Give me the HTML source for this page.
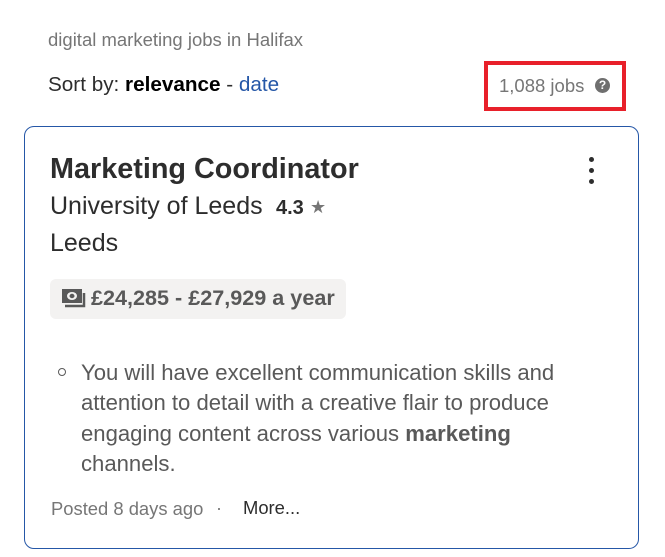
<!DOCTYPE html>
<html><head><meta charset="utf-8"><style>
body{margin:0;width:665px;height:557px;background:#fff;font-family:"Liberation Sans",sans-serif;position:relative;overflow:hidden}
.a{position:absolute;white-space:nowrap}
</style></head><body>
<div class="a" style="left:48px;top:29px;font-size:18.5px;color:#767676">digital marketing jobs in Halifax</div>
<div class="a" style="left:48px;top:73px;font-size:20.7px;color:#2d2d2d">Sort by: <b style="color:#000">relevance</b> - <span style="color:#2557a7">date</span></div>
<div class="a" style="left:484px;top:61px;width:134px;height:42px;border:4px solid #e8202a"></div>
<div class="a" style="left:499px;top:75px;font-size:18.5px;color:#767676">1,088 jobs</div>
<div class="a" style="left:595px;top:78px;width:15px;height:15px;border-radius:50%;background:#6f6f6f;color:#fff;font-size:12px;font-weight:bold;text-align:center;line-height:15px">?</div>
<div class="a" style="left:24px;top:126px;width:613px;height:421px;border:1px solid #2557a7;border-radius:10px"></div>
<div class="a" style="left:50px;top:153px;font-size:28.8px;font-weight:bold;color:#2d2d2d">Marketing Coordinator</div>
<div class="a" style="left:589px;top:157px;width:5px;height:5px;border-radius:50%;background:#2d2d2d"></div>
<div class="a" style="left:589px;top:168px;width:5px;height:5px;border-radius:50%;background:#2d2d2d"></div>
<div class="a" style="left:589px;top:179px;width:5px;height:5px;border-radius:50%;background:#2d2d2d"></div>
<div class="a" style="left:50px;top:192px;font-size:25px;color:#2d2d2d">University of Leeds</div>
<div class="a" style="left:276px;top:197px;font-size:20px;font-weight:bold;color:#2d2d2d">4.3</div>
<div class="a" style="left:310px;top:197px;font-size:18px;color:#767676">★</div>
<div class="a" style="left:50px;top:229px;font-size:25px;color:#2d2d2d">Leeds</div>
<div class="a" style="left:50px;top:279px;width:296px;height:40px;background:#f3f2f1;border-radius:6px"></div>
<svg class="a" style="left:61px;top:288px" width="26" height="22" viewBox="0 0 26 22"><rect x="1" y="1" width="20" height="14" fill="#595959"/><ellipse cx="11" cy="8" rx="5" ry="4" fill="#f3f2f1"/><ellipse cx="11" cy="8" rx="2.5" ry="2.2" fill="#595959"/><path d="M23 5v13H4" stroke="#595959" stroke-width="2.5" fill="none"/></svg>
<div class="a" style="left:91px;top:285px;font-size:21.6px;font-weight:bold;color:#595959">£24,285 - £27,929 a year</div>
<div class="a" style="left:58px;top:368px;width:6px;height:6px;border:1.3px solid #595959;border-radius:50%"></div>
<div class="a" style="left:81px;top:358px;font-size:22.1px;line-height:30.3px;color:#595959">You will have excellent communication skills and<br>attention to detail with a creative flair to produce<br>engaging content across various <b>marketing</b><br>channels.</div>
<div class="a" style="left:51px;top:498px;font-size:18.4px;color:#767676">Posted 8 days ago</div>
<div class="a" style="left:216px;top:498px;font-size:18px;color:#767676">·</div>
<div class="a" style="left:243px;top:497px;font-size:18.4px;color:#2d2d2d">More...</div>
</body></html>
